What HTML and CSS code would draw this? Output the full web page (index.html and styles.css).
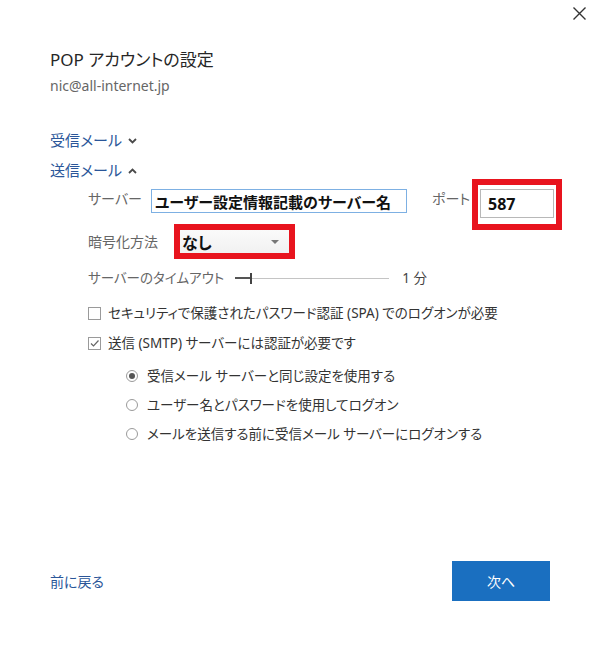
FILE: index.html
```html
<!DOCTYPE html>
<html lang="ja">

  <head>
    <meta charset="UTF-8">
    <meta name="viewport" content="width=device-width, initial-scale=1.0">
    <title>POP アカウントの設定</title>
    <link rel="stylesheet" href="styles.css">
  </head>

  <body>

    <div class="dialog">

      <div class="titlebar">
        <button class="close-btn" aria-label="閉じる">
          <svg width="13" height="13" viewBox="0 0 13 13">
            <path d="M0.5 0.5 L12.5 12.5 M12.5 0.5 L0.5 12.5" stroke="#333" stroke-width="1.4" fill="none" />
          </svg>
        </button>
      </div>

      <div class="content">
        <h1 class="title">POP アカウントの設定</h1>
        <p class="email">nic@all-internet.jp</p>

        <div class="section-toggle first">受信メール
          <svg class="chev" width="9" height="6" viewBox="0 0 9 6">
            <path d="M1 1 L4.5 4.5 L8 1" stroke="#4a4a4a" stroke-width="1.8" fill="none" />
          </svg>
        </div>
        <div class="section-toggle">送信メール
          <svg class="chev" width="9" height="6" viewBox="0 0 9 6">
            <path d="M1 5 L4.5 1.5 L8 5" stroke="#4a4a4a" stroke-width="1.8" fill="none" />
          </svg>
        </div>

        <div class="settings">

          <div class="row row-server">
            <span class="label label-server">サーバー</span>
            <div class="text-input server-input">ユーザー設定情報記載のサーバー名</div>
            <span class="label label-port">ポート</span>
            <div class="highlight port-box">
              <div class="text-input port-input">587</div>
            </div>
          </div>

          <div class="row row-crypt">
            <span class="label label-crypt">暗号化方法</span>
            <div class="highlight select-box">
              <div class="select">
                <span>なし</span>
                <span class="arrow"></span>
              </div>
            </div>
          </div>

          <div class="row row-timeout">
            <span class="label">サーバーのタイムアウト</span>
            <div class="slider">
              <span class="slider-fill"></span>
              <span class="slider-thumb"></span>
              <span class="slider-track"></span>
            </div>
            <span class="slider-value">1 分</span>
          </div>

          <div class="check-row first-check">
            <span class="checkbox"></span>
            <span>セキュリティで保護されたパスワード認証 (SPA) でのログオンが必要</span>
          </div>
          <div class="check-row">
            <span class="checkbox checked">
              <svg width="11" height="11" viewBox="0 0 11 11">
                <path d="M2 5.5 L4.5 8 L9.5 2.5" stroke="#666" stroke-width="1.2" fill="none" />
              </svg>
            </span>
            <span>送信 (SMTP) サーバーには認証が必要です</span>
          </div>

          <div class="radio-group">
            <div class="radio-row">
              <span class="radio selected"></span>
              <span>受信メール サーバーと同じ設定を使用する</span>
            </div>
            <div class="radio-row">
              <span class="radio"></span>
              <span>ユーザー名とパスワードを使用してログオン</span>
            </div>
            <div class="radio-row">
              <span class="radio"></span>
              <span>メールを送信する前に受信メール サーバーにログオンする</span>
            </div>
          </div>

        </div>
      </div>

      <div class="footer">
        <a class="back-link" href="#">前に戻る</a>
        <button class="next-btn">次へ</button>
      </div>

    </div>

  </body>

</html>
```

FILE: styles.css
```css
body {
  font-family: "Noto Sans", "Noto Sans CJK JP", sans-serif;
  font-feature-settings: "palt";
  background-color: white;
  color: #333;
  margin: 0;
  padding: 0;
}

.dialog {
  width: 600px;
  height: 647px;
  display: flex;
  flex-direction: column;
  box-sizing: border-box;
}

.titlebar {
  height: 27px;
  display: flex;
  justify-content: flex-end;
}

.close-btn {
  border: none;
  background: none;
  padding: 7px 14px 0 0;
  height: 20px;
  cursor: pointer;
}

.content {
  padding-left: 50px;
}

.title {
  margin: 21px 0 0;
  font-size: 17px;
  font-weight: normal;
  line-height: 24px;
  color: #262626;
}

.email {
  margin: 4px 0 0;
  font-size: 14px;
  line-height: 20px;
  color: #666;
}

.section-toggle {
  margin-top: 8px;
  font-size: 15px;
  line-height: 22px;
  color: #2a5699;
  display: flex;
  align-items: center;
  gap: 6px;
}

.section-toggle.first {
  margin-top: 33px;
}

.chev {
  margin-top: 2px;
}

.settings {
  padding-left: 38px;
  font-size: 13.5px;
}

.row {
  display: flex;
  align-items: flex-start;
}

.label {
  color: #666;
  line-height: 20px;
}

.row-server {
  height: 45px;
  margin-top: -2px;
}

.label-server {
  width: 63px;
  margin-top: 10px;
  font-size: 14px;
}

.text-input {
  box-sizing: border-box;
  font-weight: bold;
  color: #111;
  display: flex;
  align-items: center;
}

.server-input {
  width: 256px;
  height: 24px;
  margin-top: 10px;
  border: 1px solid #7db0e3;
  padding-left: 3px;
  font-size: 15px;
}

.label-port {
  width: 40px;
  margin: 10px 0 0 25px;
  font-size: 14px;
}

.highlight {
  border: 6px solid #e8141e;
  box-sizing: border-box;
}

.port-box {
  padding: 4px 2px 6px;
  width: 90px;
}

.port-input {
  height: 29px;
  border: 1px solid #b8b8b8;
  padding-left: 7px;
  font-size: 16px;
}

.row-crypt {
  height: 35px;
}

.label-crypt {
  width: 86px;
  margin-top: 8px;
  font-size: 14px;
}

.select-box {
  width: 121px;
  height: 35px;
}

.select {
  height: 23px;
  background: linear-gradient(#fafafa, #f1f1f1);
  display: flex;
  align-items: center;
  justify-content: space-between;
  padding: 0 10px 0 2px;
  font-size: 16px;
  font-weight: bold;
  color: #111;
}

.arrow {
  width: 0;
  height: 0;
  border-left: 4px solid transparent;
  border-right: 4px solid transparent;
  border-top: 4px solid #777;
}

.row-timeout {
  margin-top: 9px;
  align-items: center;
}

.slider {
  width: 154px;
  height: 12px;
  margin-left: 11px;
  display: flex;
  align-items: center;
}

.slider-fill {
  width: 15px;
  height: 2px;
  background-color: #555;
}

.slider-thumb {
  width: 2px;
  height: 11px;
  background-color: #444;
}

.slider-track {
  flex: 1;
  height: 1px;
  background-color: #c4c4c4;
}

.slider-value {
  margin-left: 13px;
  color: #444;
  line-height: 20px;
}

.check-row {
  display: flex;
  align-items: center;
  gap: 7px;
  line-height: 22px;
  margin-top: 8px;
  color: #333;
}

.check-row.first-check {
  margin-top: 14px;
}

.checkbox {
  width: 13px;
  height: 13px;
  border: 1px solid #9a9a9a;
  box-sizing: border-box;
  display: flex;
  align-items: center;
  justify-content: center;
}

.radio-group {
  padding-left: 38px;
  margin-top: 11px;
}

.radio-row {
  display: flex;
  align-items: center;
  gap: 9px;
  line-height: 22px;
  margin-top: 7px;
  color: #333;
}

.radio {
  width: 12px;
  height: 12px;
  border: 1px solid #9a9a9a;
  border-radius: 50%;
  box-sizing: border-box;
  display: flex;
  align-items: center;
  justify-content: center;
}

.radio.selected::after {
  content: "";
  width: 6px;
  height: 6px;
  border-radius: 50%;
  background-color: #555;
}

.footer {
  margin-top: auto;
  padding: 0 50px 46px;
  display: flex;
  justify-content: space-between;
  align-items: center;
}

.back-link {
  color: #2a5699;
  font-size: 14px;
  text-decoration: none;
}

.next-btn {
  width: 98px;
  height: 40px;
  border: none;
  background-color: #1a6fc0;
  color: white;
  font-family: inherit;
  font-size: 14px;
  cursor: pointer;
}

.next-btn:hover {
  background-color: #155fa6;
}
```
